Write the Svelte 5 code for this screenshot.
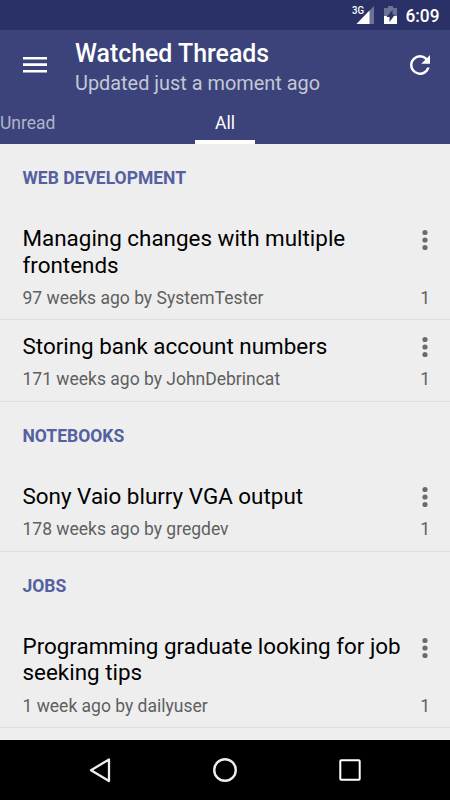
<style>
  :global(body) {
    margin: 0;
    background: #eee;
  }

  .screen {
    display: flex;
    flex-direction: column;
    width: 450px;
    height: 800px;
    overflow: hidden;
    background: #eee;
    font-family: Roboto, sans-serif;
  }

  .status-bar {
    display: flex;
    flex: none;
    height: 30px;
    background: #293166;
  }

  .status-icons {
    width: 450px;
    height: 30px;
  }

  .status-icons text {
    fill: #fff;
    font-weight: 500;
  }

  header {
    flex: none;
    height: 114px;
    background: #3b437a;
  }

  .toolbar {
    display: flex;
    align-items: center;
    height: 70px;
    padding: 0 15px 0 20px;
  }

  .icon-button {
    display: flex;
    padding: 0;
    border: none;
    background: none;
    cursor: pointer;
  }

  .titles {
    flex: 1;
    padding: 7px 0 0 25px;
    white-space: nowrap;
  }

  h1 {
    margin: 0;
    color: #fff;
    font-size: 24.9px;
    font-weight: 500;
    line-height: 30px;
  }

  .subtitle {
    color: #c4c7d7;
    font-size: 19.9px;
    line-height: 30px;
  }

  .tabs {
    display: grid;
    grid-template-columns: 195px 60px 195px;
    height: 44px;
  }

  .tab {
    box-sizing: border-box;
    padding: 6px 0 0;
    border: none;
    border-bottom: 4px solid transparent;
    background: none;
    color: #b1b4ca;
    font-family: inherit;
    font-size: 17.5px;
    line-height: 34px;
    text-align: left;
    cursor: pointer;
  }

  .tab.active {
    border-bottom-color: #fff;
    color: #fff;
    text-align: center;
  }

  main {
    flex: 1;
    overflow: hidden;
  }

  h2 {
    height: 68.6px;
    margin: 0;
    padding-left: 22.5px;
    color: #5460a0;
    font-size: 17.5px;
    font-weight: 700;
    line-height: 69.4px;
    text-transform: uppercase;
  }

  .thread {
    display: grid;
    grid-template-columns: 385px 1fr;
    row-gap: 9.7px;
    padding: 12.5px 17px 11.3px 22.5px;
    border-bottom: 1px solid #dedede;
  }

  .title {
    color: #000;
    font-size: 22.42px;
    line-height: 26.4px;
  }

  .meta,
  .count {
    color: #5f5f5f;
    font-size: 17.5px;
    line-height: 20.5px;
  }

  .count {
    padding-right: 3px;
    text-align: right;
  }

  .more {
    align-self: start;
    justify-self: end;
    margin-top: 2.5px;
  }

  .nav-bar {
    display: flex;
    flex: none;
    align-items: center;
    justify-content: space-between;
    height: 60px;
    padding: 0 85px;
    background: #000;
  }

  svg {
    display: block;
  }
</style>

<script lang="ts">
  type Thread = {
    title: string;
    meta: string;
    count: number;
  };

  type Section = {
    name: string;
    threads: Thread[];
  };

  const tabs = ['Unread', 'All'];
  let activeTab = $state('All');

  const sections: Section[] = [
    {
      name: 'Web Development',
      threads: [
        {
          title: 'Managing changes with multiple frontends',
          meta: '97 weeks ago by SystemTester',
          count: 1,
        },
        {
          title: 'Storing bank account numbers',
          meta: '171 weeks ago by JohnDebrincat',
          count: 1,
        },
      ],
    },
    {
      name: 'Notebooks',
      threads: [
        { title: 'Sony Vaio blurry VGA output', meta: '178 weeks ago by gregdev', count: 1 },
      ],
    },
    {
      name: 'Jobs',
      threads: [
        {
          title: 'Programming graduate looking for job seeking tips',
          meta: '1 week ago by dailyuser',
          count: 1,
        },
      ],
    },
  ];
</script>

<div class="screen">
  <div class="status-bar">
    <svg class="status-icons" viewBox="0 0 450 30">
      <text x="352" y="14" font-size="10.5" textLength="12" lengthAdjust="spacingAndGlyphs">3G</text>
      <!-- signal -->
      <path d="M374 6v18h-17.5z" fill="#6d7296" />
      <path d="M369.5 10.5V24h-13z" fill="#fff" />
      <!-- battery -->
      <path d="M384 8h4V6h5v2h4v8h-13z" fill="#6d7296" />
      <path d="M384 16h13v8h-13z" fill="#fff" />
      <path d="M392.5 10v4.5h2.5l-5.5 7.5v-5h-3z" fill="#293166" />
      <text x="405.5" y="22" font-size="17.5" textLength="34" lengthAdjust="spacingAndGlyphs">6:09</text>
    </svg>
  </div>

  <header>
    <div class="toolbar">
      <button class="icon-button" aria-label="Menu">
        <svg width="30" height="30" viewBox="0 0 24 24" fill="#fff">
          <path d="M2.4 18h19.2v-2.1H2.4zm0-5.3h19.2v-2.1H2.4zm0-7.2v2.1h19.2V5.5z" />
        </svg>
      </button>
      <div class="titles">
        <h1>Watched Threads</h1>
        <div class="subtitle">Updated just a moment ago</div>
      </div>
      <button class="icon-button" aria-label="Refresh">
        <svg width="30" height="30" viewBox="0 0 24 24" fill="#fff">
          <path d="M17.65 6.35A7.96 7.96 0 0 0 12 4a8 8 0 1 0 7.73 10h-2.08A6 6 0 1 1 12 6c1.66 0 3.14.69 4.22 1.78L13 11h7V4z" />
        </svg>
      </button>
    </div>
    <nav class="tabs">
      {#each tabs as tab}
        <button class="tab" class:active={tab === activeTab} onclick={() => (activeTab = tab)}>
          {tab}
        </button>
      {/each}
    </nav>
  </header>

  <main>
    {#each sections as section}
      <section>
        <h2>{section.name}</h2>
        {#each section.threads as thread}
          <div class="thread">
            <div class="title">{thread.title}</div>
            <button class="icon-button more" aria-label="More">
              <svg width="16" height="24" viewBox="0 0 16 24" fill="#6b6b6b">
                <circle cx="8" cy="4.5" r="2.6" />
                <circle cx="8" cy="12" r="2.6" />
                <circle cx="8" cy="19.5" r="2.6" />
              </svg>
            </button>
            <div class="meta">{thread.meta}</div>
            <div class="count">{thread.count}</div>
          </div>
        {/each}
      </section>
    {/each}
  </main>

  <div class="nav-bar">
    <button class="icon-button" aria-label="Back">
      <svg width="30" height="30" viewBox="0 0 30 30" fill="none" stroke="#eee" stroke-width="2.3" stroke-linejoin="round">
        <path d="M24 4.5v21.5L6 15.2z" />
      </svg>
    </button>
    <button class="icon-button" aria-label="Home">
      <svg width="30" height="30" viewBox="0 0 30 30" fill="none" stroke="#eee" stroke-width="2.4">
        <circle cx="15" cy="15" r="10.8" />
      </svg>
    </button>
    <button class="icon-button" aria-label="Overview">
      <svg width="30" height="30" viewBox="0 0 30 30" fill="none" stroke="#fff" stroke-width="2">
        <rect x="5.3" y="5.3" width="19.4" height="19.4" rx="1" />
      </svg>
    </button>
  </div>
</div>
